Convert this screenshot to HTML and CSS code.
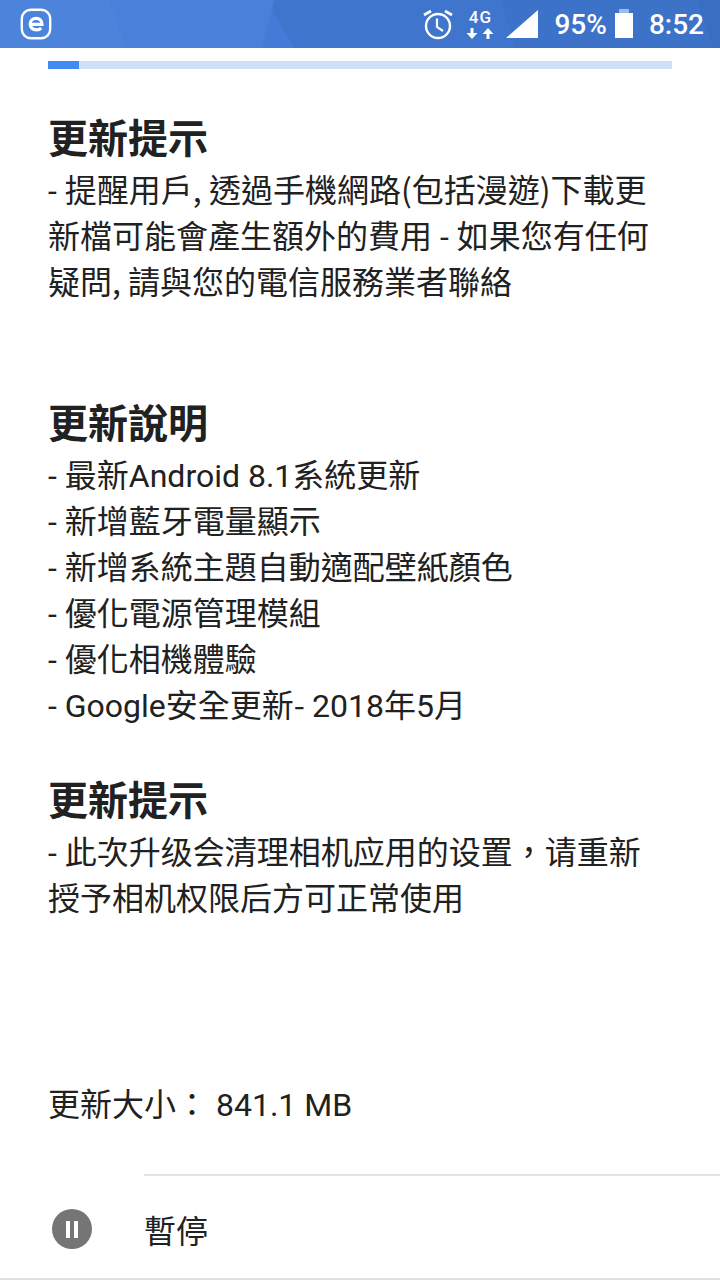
FILE: index.html
```html
<!DOCTYPE html>
<html lang="zh-Hant">
<head>
    <meta charset="UTF-8">
    <meta name="viewport" content="width=device-width, initial-scale=1.0">
    <title>更新</title>
    <link rel="stylesheet" href="styles.css">
</head>
<body>
    <div class="status-bar">
        <svg class="status-bg" width="720" height="48" viewBox="0 0 720 48">
            <rect width="720" height="48" fill="#3f75cd"/>
            <path d="M500 0h220v48H516z" fill="#3d72c9"/>
            <path d="M697 0h23v48h-7z" fill="#3a6ec3"/>
            <path d="M274 0l-1 12 22 36h-33z" fill="#447bd6"/>
            <path d="M0 0h274l-12 48H0z" fill="#4a80d9"/>
            <path d="M0 0h109l17 48H0z" fill="#4c83db"/>
        </svg>
        <svg class="app-icon" width="32" height="32" viewBox="0 0 32 32">
            <rect x="1.800" y="1.800" width="28.400" height="28.400" rx="9" fill="none" stroke="#fff" stroke-width="2.400"/>
            <path d="M10 16.400h12c.2-3.600-2.200-6-5.800-6-3.500 0-6 2.400-6 5.700 0 3.400 2.500 5.700 6.200 5.700 2 0 3.700-.6 4.800-1.700" fill="none" stroke="#fff" stroke-width="3.200"/>
        </svg>
        <div class="status-right">
            <svg width="32" height="32" viewBox="0 0 32 32">
                <circle cx="16" cy="18" r="12" fill="none" stroke="#fff" stroke-width="2.400"/>
                <path d="M15 10.500V19l6 4" fill="none" stroke="#fff" stroke-width="2.200"/>
                <path d="M2 7l7-4M30 7l-7-4" fill="none" stroke="#fff" stroke-width="2.600"/>
            </svg>
            <div class="network">
                <span class="network-label">4G</span>
                <svg width="30" height="11" viewBox="0 0 30 11">
                    <path d="M5.500 0h3v5h4L7 11 1.500 5h4zM23 0l5.500 6h-4v5h-3V6h-4z" fill="#fff"/>
                </svg>
            </div>
            <svg class="signal" width="32" height="28" viewBox="0 0 32 28">
                <path d="M32 0v28H0z" fill="#fff"/>
            </svg>
            <span class="battery-text">95%</span>
            <div class="battery"></div>
            <span class="clock">8:52</span>
        </div>
    </div>

    <div class="progress"><div class="progress-fill"></div></div>

    <div class="content">
        <h2>更新提示</h2>
        <p>- 提醒用戶<span class="cjk">, </span>透過手機網路<span class="cjk">(</span>包括漫遊<span class="cjk">)</span>下載更<br>新檔可能會產生額外的費用 - 如果您有任何<br>疑問<span class="cjk">, </span>請與您的電信服務業者聯絡</p>

        <h2 class="second">更新說明</h2>
        <p>- 最新Android 8.1系統更新<br>- 新增藍牙電量顯示<br>- 新增系統主題自動適配壁紙顏色<br>- 優化電源管理模組<br>- 優化相機體驗<br>- Google安全更新<span class="cjk">- </span>2018年5月</p>

        <h2 class="third">更新提示</h2>
        <p>- 此次升级会清理相机应用的设置，请重新<br>授予相机权限后方可正常使用</p>

        <p class="size">更新大小： 841.1 MB</p>
    </div>

    <div class="actions">
        <div class="pause-icon"><span></span><span></span></div>
        <span class="pause-label">暫停</span>
    </div>
</body>
</html>
```

FILE: styles.css
```css
html, body {
    margin: 0;
    height: 1280px;
    overflow: hidden;
}

body {
    position: relative;
    background-color: #fff;
    color: #212121;
    font-family: Roboto, "Noto Sans CJK TC", sans-serif;
}

.cjk {
    font-family: "Noto Sans CJK TC", sans-serif;
    line-height: 0;
}

.status-bar {
    position: relative;
    display: flex;
    justify-content: space-between;
    align-items: center;
    height: 48px;
    padding: 0 16px 0 20px;
    color: #fff;
}

.status-bg {
    position: absolute;
    top: 0;
    left: 0;
}

.app-icon,
.status-right {
    position: relative;
}

.status-right {
    display: flex;
    align-items: center;
}

.network {
    display: flex;
    flex-direction: column;
    align-items: center;
    width: 30px;
    margin-left: 11px;
}

.network-label {
    font-size: 17px;
    font-weight: 500;
    line-height: 15px;
    letter-spacing: 1px;
}

.network svg {
    display: block;
    margin-top: 3px;
}

.signal {
    margin-left: 11px;
}

.battery-text {
    margin-left: 16px;
    font-size: 28px;
    font-weight: 500;
}

.battery {
    position: relative;
    width: 18px;
    height: 25px;
    margin: 3px 0 0 8px;
    background-color: #fff;
}

.battery::before {
    content: "";
    position: absolute;
    top: -4px;
    left: 4px;
    width: 10px;
    height: 4px;
    background-color: #9fbbe8;
}

.clock {
    margin-left: 16px;
    font-size: 28px;
    font-weight: 500;
}

.progress {
    height: 8px;
    margin: 13px 48px 0;
    background-color: #cfdffa;
}

.progress-fill {
    width: 31px;
    height: 100%;
    background-color: #4389f5;
}

.content {
    padding: 0 48px;
}

h2 {
    margin: 43px 0 0;
    font-size: 40px;
    line-height: 56px;
    font-weight: 700;
}

h2.second {
    margin-top: 91px;
}

h2.third {
    margin-top: 45px;
}

p {
    margin: 0;
    font-size: 32px;
    line-height: 46px;
}

.size {
    margin-top: 160px;
}

.actions {
    position: absolute;
    left: 0;
    right: 0;
    bottom: 0;
    display: flex;
    align-items: center;
    height: 104px;
    border-bottom: 2px solid #e0e0e0;
}

.actions::before {
    content: "";
    position: absolute;
    top: 0;
    left: 144px;
    right: 0;
    height: 2px;
    background-color: #e4e4e4;
}

.pause-icon {
    display: flex;
    justify-content: center;
    align-items: center;
    gap: 4px;
    width: 40px;
    height: 40px;
    margin: 6px 0 0 52px;
    border-radius: 50%;
    background-color: #757575;
}

.pause-icon span {
    width: 4px;
    height: 17px;
    background-color: #fff;
}

.pause-label {
    margin: 6px 0 0 52px;
    font-size: 32px;
}
```
